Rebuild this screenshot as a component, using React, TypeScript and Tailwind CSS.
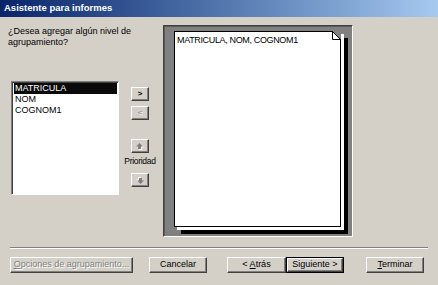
import React from 'react';

const raised =
  'border border-t-white border-l-white border-r-[#404040] border-b-[#404040] shadow-[inset_-1px_-1px_0_#808080] bg-[#d4d0c8]';

const disabledText = 'text-[#808080] [text-shadow:1px_1px_0_#fff]';

const Arrow: React.FC<{ down?: boolean }> = ({ down }) => (
  <svg width="8" height="7" viewBox="0 0 8 7" className={down ? 'rotate-180' : ''}>
    <path d="M4.5 1 L8 4.5 L6 4.5 L6 7 L3 7 L3 4.5 L1 4.5 Z" fill="#fff" />
    <path d="M3.5 0 L7 3.5 L5 3.5 L5 6 L2 6 L2 3.5 L0 3.5 Z" fill="#808080" />
  </svg>
);

const SmallButton: React.FC<{ children: React.ReactNode; className?: string }> = ({ children, className = '' }) => (
  <div className={`${raised} w-[18px] h-[14px] flex items-center justify-center ${className}`}>{children}</div>
);

const fields = ['MATRICULA', 'NOM', 'COGNOM1'];

const App: React.FC = () => {
  return (
    <div className="w-[438px] h-[285px] bg-[#d4d0c8] flex flex-col font-['Liberation_Sans',Arial,sans-serif] text-[9px] text-black overflow-hidden">
      {/* Title bar */}
      <div className="h-[17px] flex items-center px-[4px] bg-gradient-to-r from-[#0a246a] to-[#a6caf0]">
        <span className="text-white font-bold text-[9.5px]">Asistente para informes</span>
      </div>

      {/* Main area */}
      <div className="h-[230px] flex">
        <div className="w-[163px] shrink-0 pl-[8px] pt-[9px] flex flex-col">
          <p className="leading-[11px]">
            ¿Desea agregar algún nivel de
            <br />
            agrupamiento?
          </p>
          <div className="flex mt-[33px] pl-[3px]">
            {/* List box */}
            <div className="w-[108px] h-[114px] bg-white border border-t-[#808080] border-l-[#808080] border-r-white border-b-white shadow-[inset_1px_1px_0_#404040] p-[1px] pl-[2px] pt-[1px]">
              {fields.map((f, i) => (
                <div
                  key={f}
                  className={`h-[11px] leading-[11px] pl-[1px] ${i === 0 ? 'bg-[#0a0a0a] text-white' : ''}`}
                >
                  {f}
                </div>
              ))}
            </div>

            {/* Move buttons */}
            <div className="ml-[4px] w-[34px] flex flex-col items-center pt-[6px]">
              <SmallButton>
                <span className="font-bold text-[8px] leading-none">&gt;</span>
              </SmallButton>
              <SmallButton className="mt-[5px]">
                <span className={`text-[8px] leading-none ${disabledText}`}>&lt;</span>
              </SmallButton>
              <SmallButton className="mt-[19px]">
                <Arrow />
              </SmallButton>
              <span className="mt-[3px] leading-[11px] tracking-[-0.3px] text-[8.5px]">Prioridad</span>
              <SmallButton className="mt-[6px]">
                <Arrow down />
              </SmallButton>
            </div>
          </div>
        </div>

        {/* Preview frame */}
        <div className="mt-[8px] w-[190px] h-[212px] shrink-0 bg-[#808080] border border-t-[#404040] border-l-[#404040] border-r-white border-b-white shadow-[inset_1px_1px_0_#5a5a5a] pl-[10px] pt-[5px]">
          <div className="relative w-[167px] h-[196px] bg-white border border-black shadow-[3px_3px_0_#fff,7px_7px_0_#000]">
            <span className="absolute left-[2px] top-[3px] text-[9px] tracking-[-0.35px] leading-[11px]">
              MATRICULA, NOM, COGNOM1
            </span>
            <svg width="10" height="10" viewBox="0 0 10 10" className="absolute -right-[1px] -top-[1px]">
              <path d="M1 0 L10 0 L10 9 Z" fill="#808080" />
              <path d="M1.5 0.5 L1.5 8.5 L9.5 8.5 Z" fill="#fff" />
              <path d="M1.5 0 L1.5 8.5 L10 8.5 M1.5 0.5 L9.5 8.5" stroke="#000" strokeWidth="1" fill="none" />
            </svg>
          </div>
        </div>
      </div>

      {/* Separator */}
      <div className="mx-[10px] h-[2px] border-t border-t-[#808080] border-b border-b-white" />

      {/* Bottom buttons */}
      <div className="mt-[8px] px-[10px] flex">
        <div className={`${raised} w-[123px] h-[16px] flex items-center justify-center ${disabledText}`}>
          <span>
            <span className="underline">O</span>pciones de agrupamiento...
          </span>
        </div>
        <div className={`${raised} ml-[16px] w-[58px] h-[16px] flex items-center justify-center`}>Cancelar</div>
        <div className={`${raised} ml-[20px] w-[59px] h-[16px] flex items-center justify-center`}>
          <span>
            &lt; <span className="underline">A</span>trás
          </span>
        </div>
        <div className="w-[58px] h-[16px] border border-black">
          <div className={`${raised} w-full h-full flex items-center justify-center`}>Siguiente &gt;</div>
        </div>
        <div className={`${raised} ml-[22px] w-[58px] h-[16px] flex items-center justify-center`}>
          <span>
            <span className="underline">T</span>erminar
          </span>
        </div>
      </div>
    </div>
  );
};

export default App;
